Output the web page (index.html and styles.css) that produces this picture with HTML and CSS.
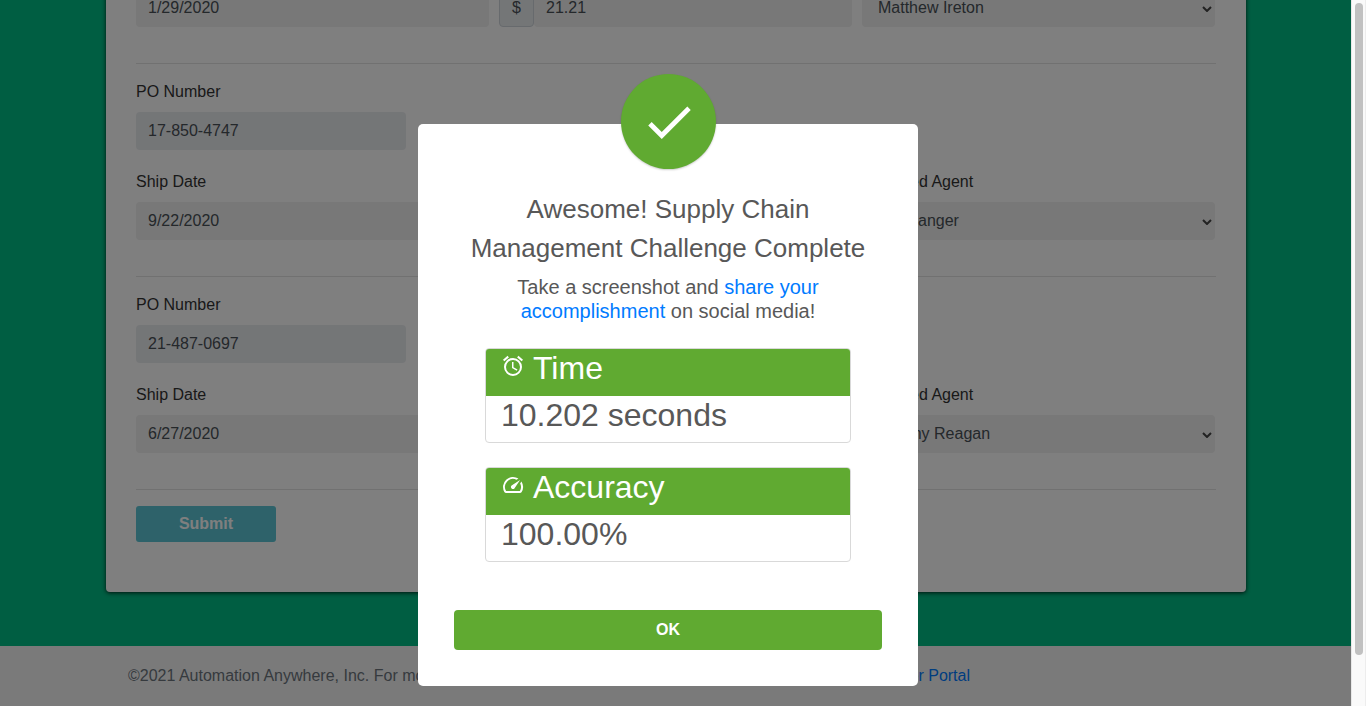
FILE: index.html
```html
<!DOCTYPE html>
<html lang="en">
<head>
<meta charset="utf-8">
<title>Supply Chain Management Challenge</title>
<link rel="stylesheet" href="styles.css">
</head>
<body>
<div class="page">
  <main class="main">
    <section class="card">
      <div class="row">
        <div class="input">1/29/2020</div>
        <div class="group"><span class="prefix">$</span><div class="input">21.21</div></div>
        <div class="input select">Matthew Ireton<svg class="chevron" viewBox="0 0 10 6"><path d="M1 1l4 4 4-4"/></svg></div>
      </div>
      <hr>
      <label class="label">PO Number</label>
      <div class="input po">17-850-4747</div>
      <div class="row labels"><span>Ship Date</span><span>Order Total</span><span>Assigned Agent</span></div>
      <div class="row">
        <div class="input">9/22/2020</div>
        <div class="group"><span class="prefix">$</span><div class="input"></div></div>
        <div class="input select">Jim Sanger<svg class="chevron" viewBox="0 0 10 6"><path d="M1 1l4 4 4-4"/></svg></div>
      </div>
      <hr>
      <label class="label">PO Number</label>
      <div class="input po">21-487-0697</div>
      <div class="row labels"><span>Ship Date</span><span>Order Total</span><span>Assigned Agent</span></div>
      <div class="row">
        <div class="input">6/27/2020</div>
        <div class="group"><span class="prefix">$</span><div class="input"></div></div>
        <div class="input select">Johnny Reagan<svg class="chevron" viewBox="0 0 10 6"><path d="M1 1l4 4 4-4"/></svg></div>
      </div>
      <hr>
      <button class="submit">Submit</button>
    </section>
  </main>
  <footer class="footer"><span>©2021 Automation Anywhere, Inc. For more information</span><a class="link">Developer Portal</a></footer>
  <div class="overlay">
    <div class="modal">
      <div class="badge"><svg width="58" height="58" viewBox="0 0 24 24" fill="#fff"><path d="M9 16.17L4.83 12l-1.42 1.41L9 19 21 7l-1.41-1.41z"/></svg></div>
      <h1 class="title">Awesome! Supply Chain<br>Management Challenge Complete</h1>
      <p class="subtitle">Take a screenshot and <a class="link">share your<br>accomplishment</a> on social media!</p>
      <div class="stat">
        <div class="stat-head"><svg class="icon" viewBox="0 0 24 24"><path d="M22 5.72l-4.6-3.86-1.29 1.53 4.6 3.86L22 5.72zM7.88 3.39L6.6 1.86 2 5.71l1.29 1.53 4.59-3.85zM12.5 8H11v6l4.75 2.85.75-1.23-4-2.37V8zM12 4a9 9 0 100 18 9 9 0 000-18zm0 16a7 7 0 110-14 7 7 0 010 14z"/></svg>Time</div>
        <div class="stat-value">10.202 seconds</div>
      </div>
      <div class="stat">
        <div class="stat-head"><svg class="icon" viewBox="0 0 24 24"><path d="M20.38 8.57l-1.23 1.85a8 8 0 01-.22 7.58H5.07A8 8 0 0115.58 6.85l1.85-1.23A10 10 0 003.35 19a2 2 0 001.72 1h13.85a2 2 0 001.74-1 10 10 0 00-.27-10.44zM10.59 15.41a2 2 0 002.83 0l5.66-8.49-8.49 5.66a2 2 0 000 2.83z"/></svg>Accuracy</div>
        <div class="stat-value">100.00%</div>
      </div>
      <button class="ok">OK</button>
    </div>
  </div>
</div>
<div class="scrollbar"><div class="thumb"></div></div>
</body>
</html>
```
FILE: styles.css
```css
* { box-sizing: border-box; }
body {
  margin: 0;
  display: flex;
  width: 1366px;
  height: 706px;
  overflow: hidden;
  font: 16px/24px "Liberation Sans", Arial, sans-serif;
  color: #333;
}
.page { position: relative; width: 1351px; height: 706px; overflow: hidden; }
.main {
  height: 646px;
  display: flex;
  align-items: flex-end;
  padding: 0 105px 54px 106px;
  background: #00bc84;
}
.card {
  width: 1140px;
  padding: 30px 30px 50px;
  background: #fff;
  border-radius: 4px;
  box-shadow: 0 1px 4px rgba(0, 0, 0, .8);
}
.row { display: grid; grid-template-columns: repeat(3, 353px); column-gap: 10px; }
.input {
  height: 38px;
  padding: 7px 12px;
  background: #f0f0f0;
  border-radius: 4px;
  color: #495057;
}
.po { width: 270px; background: #e9ecef; }
.group { display: flex; }
.group .input { flex: 1; }
.prefix {
  width: 35px;
  padding: 6px 0;
  text-align: center;
  background: #e9ecef;
  border: 1px solid #ced4da;
  border-radius: 4px;
  color: #495057;
}
.select {
  display: flex;
  align-items: center;
  justify-content: space-between;
  padding: 0 3px 0 16px;
}
.chevron { width: 10px; height: 6px; margin-top: 2px; fill: none; stroke: #444; stroke-width: 2; }
hr { height: 1px; margin: 36px 0 16px; border: 0; background: #e3e3e3; }
.label { display: block; margin-bottom: 8px; }
.labels { margin: 20px 0 8px; }
.submit {
  display: block;
  width: 140px;
  height: 36px;
  padding: 0;
  border: 0;
  border-radius: 3px;
  background: #5cc4d4;
  color: #fff;
  font: bold 16px/36px "Liberation Sans", Arial, sans-serif;
}
.footer {
  display: flex;
  justify-content: space-between;
  height: 60px;
  padding: 18px 381px 18px 128px;
  background: #f5f5f5;
  color: #6c757d;
}
.link { color: #007bff; }
.overlay {
  position: absolute;
  inset: 0;
  display: flex;
  align-items: flex-start;
  justify-content: center;
  padding: 124px 15px 0 0;
  background: rgba(0, 0, 0, .5);
}
.modal {
  position: relative;
  width: 500px;
  height: 562px;
  padding: 66px 36px 36px;
  background: #fff;
  border-radius: 5px;
  color: #585858;
  text-align: center;
}
.badge {
  position: absolute;
  top: -50px;
  left: 203px;
  display: flex;
  align-items: center;
  justify-content: center;
  width: 95px;
  height: 95px;
  border-radius: 50%;
  background: #60aa31;
  box-shadow: 0 1px 2px rgba(0, 0, 0, .2);
}
.title { margin: 0; font-size: 26px; font-weight: 400; line-height: 39px; }
.subtitle { margin: 7px 0 25px; font-size: 20px; line-height: 24px; }
.stat {
  width: 366px;
  height: 95px;
  margin: 0 auto 24px;
  border: 1px solid #d9d9d9;
  border-radius: 4px;
  overflow: hidden;
  font-size: 32px;
  line-height: 38px;
  text-align: left;
}
.stat-head { display: flex; gap: 8px; height: 47px; padding: 0 15px; background: #60aa31; color: #fff; }
.icon { width: 24px; height: 24px; margin-top: 5px; fill: currentColor; }
.stat-value { padding: 0 15px; }
.ok {
  display: block;
  width: 428px;
  height: 40px;
  margin-top: 48px;
  padding: 0;
  border: 0;
  border-radius: 4px;
  background: #60aa31;
  color: #fff;
  font: bold 16px/40px "Liberation Sans", Arial, sans-serif;
}
.scrollbar {
  width: 15px;
  height: 706px;
  padding: 3px 3px 0;
  background: #fafafa;
  border-left: 1px solid #e8e8e8;
  border-right: 1px solid #ededed;
}
.thumb { width: 8px; height: 652px; border-radius: 4px; background: #c1c1c1; }
```
